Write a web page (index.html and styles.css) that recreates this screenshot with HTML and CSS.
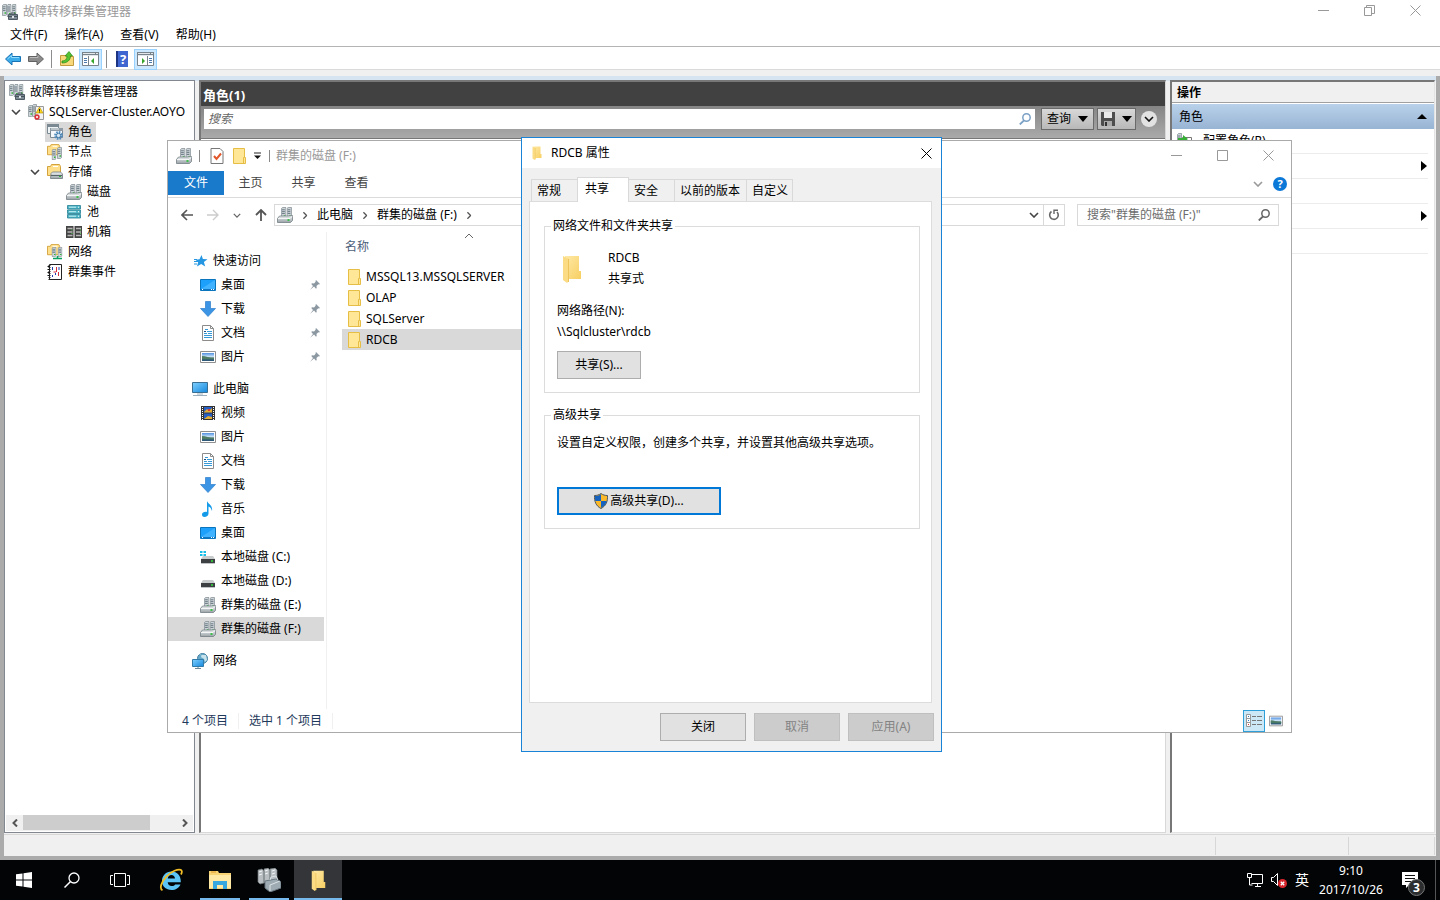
FILE: index.html
```html
<!DOCTYPE html>
<html lang="zh-CN">
<head>
<meta charset="utf-8">
<title>故障转移群集管理器</title>
<link rel="stylesheet" href="styles.css">
</head>
<body>
<svg class="sprite" aria-hidden="true">
  <defs>
    <linearGradient id="g-blue" x1="0" y1="0" x2="1" y2="1"><stop offset="0" stop-color="#7fd0ff"/><stop offset="1" stop-color="#1487dc"/></linearGradient>
    <linearGradient id="g-sky" x1="0" y1="0" x2="0" y2="1"><stop offset="0" stop-color="#4f8fe0"/><stop offset=".5" stop-color="#d7ecfa"/><stop offset=".6" stop-color="#4c7468"/><stop offset="1" stop-color="#26547c"/></linearGradient>
    <linearGradient id="g-folder" x1="0" y1="0" x2="1" y2="1"><stop offset="0" stop-color="#ffe9a6"/><stop offset="1" stop-color="#f7cf62"/></linearGradient>
    <linearGradient id="g-metal" x1="0" y1="0" x2="0" y2="1"><stop offset="0" stop-color="#eef1f2"/><stop offset="1" stop-color="#9aa3a8"/></linearGradient>
  </defs>
  <symbol id="server" viewBox="0 0 5 13" preserveAspectRatio="none"><path d="M.5 1.500 1.500.5h3v11l-1 1h-3z" fill="#cdd5d9" stroke="#7b878e" stroke-width=".7"/><path d="M1 3h2.500M1 5h2.500M1 7h2.500" stroke="#56666f" stroke-width=".8"/><path d="M2.500 9h1.500v1.500H2.500z" fill="#35b53a"/></symbol>
  <symbol id="cluster" viewBox="0 0 16 16"><use href="#server" x="0" y="0" width="5" height="12"/><use href="#server" x="4.500" y="0" width="5" height="13"/><use href="#server" x="9.500" y="0" width="5" height="12"/><path d="M6.500 10.500h9v5h-9z" fill="#7d8a94" stroke="#4f5b64"/><path d="M9 10.500V9h4v1.500M6.500 12.500h9" fill="none" stroke="#46525b"/><path d="M10 12h2v2h-2z" fill="#dfe6ea"/></symbol>
  <symbol id="clusterwarn" viewBox="0 0 16 16"><use href="#server" x="0" y="1" width="5" height="12"/><use href="#server" x="4" y="0" width="5" height="13"/><path d="M7.500 2.500h8v13h-8z" fill="#f3f3f3" stroke="#999"/><path d="m11.500 3 3.500 6H8z" fill="#ffd91c" stroke="#b58b00" stroke-width=".6"/><path d="M11.500 5v2m0 .5v1" stroke="#222"/><circle cx="9" cy="13" r="2.700" fill="#d9353b"/><path d="m8 12 2 2m0-2-2 2" stroke="#fff" stroke-width=".8"/></symbol>
  <symbol id="roles" viewBox="0 0 16 16"><path d="M.5.5h11v9H.5z" fill="#eef3f6" stroke="#7b8992"/><path d="M0 0h12v3H0z" fill="#7b8992"/><path d="M3.500 4.500h12v9h-12z" fill="#f4f8fb" stroke="#7b8992"/><path d="M3 4h13v3H3z" fill="#8e9ba4"/><path d="M4 5h8" stroke="#e9eef1"/><circle cx="11.500" cy="11.500" r="3.200" fill="none" stroke="#4f8cc0" stroke-width="2.400" stroke-dasharray="1.500 1"/><circle cx="11.500" cy="11.500" r="2.200" fill="#d6e7f3" stroke="#3e78a8"/></symbol>
  <symbol id="folderflat" viewBox="0 0 16 16"><path d="M.5 3.500h3l1-2h8l1 2v9H.5z" fill="#ffdf8a" stroke="#d3a23c"/><path d="M6 3.500h5" stroke="#fff"/></symbol>
  <symbol id="nodes" viewBox="0 0 16 16"><use href="#folderflat" width="15" height="15" y="-1"/><use href="#server" x="4.500" y="5" width="5" height="11"/><use href="#server" x="10" y="3" width="5" height="12"/></symbol>
  <symbol id="storage" viewBox="0 0 16 16"><use href="#folderflat" y="-1" width="16" height="16"/><path d="m4 9.500 1.500-1.500h8l2 2v4.500h-12z" fill="url(#g-metal)" stroke="#707a80" stroke-width=".8"/><path d="M4 11.500h11" stroke="#59636a"/><path d="M12 12.500h2" stroke="#29bd32"/></symbol>
  <symbol id="disk" viewBox="0 0 16 16"><use href="#server" x="4" y="0" width="5.500" height="12"/><use href="#server" x="9.500" y="0" width="5.500" height="12"/><path d="m.5 11.500 2-2.500h8.500l4.500-.5v5l-2 2H.5z" fill="url(#g-metal)" stroke="#737d83" stroke-width=".8"/><path d="M1 11.500h12l2-2" fill="none" stroke="#fff" stroke-width=".8"/><path d="M10.500 13h2" stroke="#16c326" stroke-width="1.500"/></symbol>
  <symbol id="pool" viewBox="0 0 16 16"><path d="M1.500 1.500h13v3.500h-13zm0 4.500h13v3.500h-13zm0 4.500h13V14h-13z" fill="#52b7c9" stroke="#237f92" stroke-width=".8"/><path d="M3 3.200h7M3 7.700h7M3 12.200h7" stroke="#c8f0f5"/><path d="M12 3.200h1m-1 4.500h1m-1 4.500h1" stroke="#fff"/></symbol>
  <symbol id="enclosure" viewBox="0 0 16 16"><path d="M0 2h7.500v12H0zm8.500 0H16v12H8.500z" fill="#444"/><path d="M1.500 4.500h5m-5 3.500h5m-5 3.500h5m3.500-7h5M10 8h5m-5 3.500h5" stroke="#b7b7b7" stroke-width="1.300"/><path d="M5.500 6h1m-1 3.500h1M14 6h1m-1 3.500h1" stroke="#61d35a"/></symbol>
  <symbol id="clusternet" viewBox="0 0 16 16"><use href="#folderflat" width="15" height="15" y="-1"/><use href="#server" x="4.500" y="3" width="5" height="10"/><use href="#server" x="10.500" y="3" width="5" height="10"/><path d="M6 14.500h9M10.500 12v3" stroke="#0c9f62" stroke-width="1.600"/></symbol>
  <symbol id="events" viewBox="0 0 16 16"><path d="M2.500.5h12v15h-12z" fill="#fff" stroke="#222"/><path d="M2.500 1v15" stroke="#222" stroke-width="2" stroke-dasharray="1 1"/><path d="M.5 2.500h2m-2 3h2m-2 3h2m-2 3h2" stroke="#111"/><path d="M5.500 3v3m0 5v2M8.500 9v2M12 3v3" stroke="#203fae"/><path d="M9.500 3v5m-3 0h2.500m2.500 0v4" stroke="#d42f3b"/></symbol>
  <symbol id="star" viewBox="0 0 16 16"><path d="m9.500 2 1.400 4 4.600.2-3.600 2.700 1.300 4.600-4-2.500L5 13.500l1.200-4.400-2.900-2.400 4.200-.5z" fill="#2596e1"/><path d="M2 6.500h3m-3 2h4m-4 2.500h3" stroke="#2596e1"/></symbol>
  <symbol id="desktop" viewBox="0 0 16 16"><path d="M.5 2.500h15v11H.5z" fill="#1da0fb" stroke="#0a75bc"/><path d="m1 12 14-9v9z" fill="#40b2ff"/><path d="M1 12.500h14" stroke="#0e76c4"/><path d="M2 12.500h1m8 0h1m1 0h1" stroke="#fff"/></symbol>
  <symbol id="down" viewBox="0 0 16 16"><path d="M5.500.5h5v7h5L8 15.500.5 7.500h5z" fill="#3b94e4" stroke="#2b7ecb" stroke-width=".7"/></symbol>
  <symbol id="doc" viewBox="0 0 16 16"><path d="M2.500.5h8l3 3v12h-11z" fill="#fff" stroke="#8b8b8b"/><path d="M10.500.5v3h3" fill="none" stroke="#8b8b8b"/><path d="M5 4.500h3m-1 2h5M4 8.500h3m1 0h4m-8 2h8m-8 2h8" stroke="#3799d6"/><path d="M4 6.500h2" stroke="#174f82"/></symbol>
  <symbol id="pic" viewBox="0 0 16 16"><path d="M.5 2.500h15v11H.5z" fill="#fff" stroke="#8f8f8f"/><path d="M2 4h12v8H2z" fill="url(#g-sky)"/><path d="M2 7c4 0 7 2 12 2v1H2z" fill="#4e7d66"/></symbol>
  <symbol id="pc" viewBox="0 0 16 16"><path d="M.5 1.500h15v10H.5z" fill="url(#g-blue)" stroke="#3b6f91"/><path d="M5 13h6M1 14.500h14" stroke="#9bb0bc"/></symbol>
  <symbol id="video" viewBox="0 0 16 16"><path d="M1 1h14v14H1z" fill="#333"/><path d="M2.500 2v13m11-13v13" stroke="#fff" stroke-dasharray="1 1"/><path d="M4 2h8v5.500H4zm0 6.500h8V14H4z" fill="#285fc5"/><path d="m4 7 3-3 2 2 3-3v4.500H4zm0 7 4-3 4 1v2z" fill="#e6ae33"/><path d="M8 4h2v2H8z" fill="#d53a39"/></symbol>
  <symbol id="music" viewBox="0 0 16 16"><path d="M7 0c1 3 6 4 5 10-1-3-2-4-3.500-4.500v7c0 2-2 3.500-4 3.500S2 15 2 13.500c0-2 2.500-3 5-2.500z" fill="#139be9"/></symbol>
  <symbol id="ddrive" viewBox="0 0 16 16"><path d="m1 10 2-3h10l2 3z" fill="#c9cccd"/><path d="M1 10h14v4H1z" fill="#3c4043"/><path d="M11 12h2" stroke="#31e13a" stroke-width="1.500"/><path d="M1 14.500h14" stroke="#bfc3c5"/></symbol>
  <symbol id="cdrive" viewBox="0 0 16 16"><use href="#ddrive" width="16" height="16"/><path d="M0 2h2.500v2H0zm3.500 0H6v2H3.500zM0 5h2.500v2H0zm3.500 0H6v2H3.500z" fill="#15bde9"/></symbol>
  <symbol id="globe" viewBox="0 0 16 16"><circle cx="10.500" cy="5.500" r="5" fill="#66aacb" stroke="#427d9f"/><path d="M7 2c2-1 3 0 2 2l3 2 1 3 2-2-1-5" fill="#c7e2ea"/><path d="M.5 6.500h11v7H.5z" fill="url(#g-blue)" stroke="#317ba8"/><path d="M3 15.500h6M6 14v1" stroke="#6c8998"/></symbol>
  <symbol id="folder" viewBox="0 0 14 16"><path d="M1.500.5h11v9h1v6h-12z" fill="#ffe797" stroke="#e6bd45"/><path d="M11.500 15.500v-6h1" fill="none" stroke="#e6bd45"/></symbol>
  <symbol id="folder3d" viewBox="0 0 20 28"><path d="M3 1h14v15h2v8H3z" fill="url(#g-folder)"/><path d="m1 1 6 3v22l-2 2-4-3z" fill="#fbdc85"/><path d="M6.500 4v23" stroke="#edc35b"/></symbol>
  <symbol id="pin" viewBox="0 0 10 10"><path d="m6 0 4 4-1 .5-.7-.2L6.500 6l.2 2-.7.700L4 6.500.5 9.500 0 10l3-4L1.300 4l.7-.7 2 .2 1.700-1.800L5.500 1z" fill="#8c98a1"/></symbol>
  <symbol id="chev" viewBox="0 0 10 6"><path d="m1 1 4 4 4-4" fill="none" stroke="currentColor" stroke-width="1.600"/></symbol>
  <symbol id="close" viewBox="0 0 11 11"><path d="m.5.5 10 10m0-10-10 10" stroke="currentColor"/></symbol>
  <symbol id="min" viewBox="0 0 11 11"><path d="M0 5.500h11" stroke="currentColor"/></symbol>
  <symbol id="mag" viewBox="0 0 12 12"><circle cx="7.500" cy="4.500" r="3.700" fill="none" stroke="currentColor" stroke-width="1.500"/><path d="M5 7.300.8 11.500" stroke="currentColor" stroke-width="1.800"/></symbol>
  <symbol id="paneicon" viewBox="0 0 17 14"><path d="M.5.5h16v13H.5z" fill="#fff" stroke="#78838c"/><path d="M0 0h17v4H0z" fill="#78838c"/><path d="M1 1.500h12m1 0h2M1 3.500h15" stroke="#e2e8ec"/></symbol>
</svg>

<main class="app">
  <header class="app-title">
    <svg class="i16"><use href="#cluster"/></svg>
    <h1>故障转移群集管理器</h1>
    <div class="win-buttons">
      <button aria-label="最小化"><svg class="i11"><use href="#min"/></svg></button>
      <button aria-label="还原"><svg class="i11" viewBox="0 0 11 11"><path d="M.5 2.500h7v8h-7zM2.500 2.500v-2h8v8h-2.500" fill="none" stroke="currentColor"/></svg></button>
      <button aria-label="关闭窗口"><svg class="i11"><use href="#close"/></svg></button>
    </div>
  </header>
  <nav class="menu"><button>文件(F)</button><button>操作(A)</button><button>查看(V)</button><button>帮助(H)</button></nav>
  <div class="toolbar">
    <button aria-label="后退"><svg class="i16" viewBox="0 0 16 16"><path d="m.5 8 6.500-6v3.500h8.500v5H7V14z" fill="#3cabe9" stroke="#1873b4"/><path d="m2.500 8 4-3.500v2H14" fill="none" stroke="#90dcff"/></svg></button>
    <button aria-label="前进"><svg class="i16" viewBox="0 0 16 16"><path d="M15.500 8 9 2v3.500H.5v5H9V14z" fill="#8b8b8b" stroke="#626262"/><path d="M2 6.500h8v-2" fill="none" stroke="#b9b9b9"/></svg></button>
    <span class="tool-sep"></span>
    <button aria-label="上一级"><svg class="i16" viewBox="0 0 16 16"><path d="M1.500 4.500h5l1 1h7v9h-13z" fill="#f8d878" stroke="#c39b3f"/><path d="M3 10c4 0 5-3 5-5H6l4-4.500L13.500 5h-2c0 4-3 7-8.500 7z" fill="#55c432" stroke="#28881b" stroke-width=".7"/></svg></button>
    <button class="pressed" aria-label="显示控制台树"><svg class="pane-svg" viewBox="0 0 17 14"><use href="#paneicon"/><path d="M6.500 4v10" stroke="#78838c"/><path d="M2 6.500h3m-3 2h3m-3 2h3" stroke="#4e79ad"/><path d="m12 6-3 3 3 3z" fill="#35a52b"/></svg></button>
    <span class="tool-sep"></span>
    <button aria-label="帮助"><svg class="i16" viewBox="0 0 16 16"><path d="M2 0h12v16H2z" fill="#3f66d0"/><path d="M2 0h2v16H2z" fill="#1c3482"/><text x="9" y="13" class="help-q">?</text></svg></button>
    <button class="pressed" aria-label="显示操作窗格"><svg class="pane-svg" viewBox="0 0 17 14"><use href="#paneicon"/><path d="M10.500 4v10" stroke="#78838c"/><path d="M12 6.500h3m-3 2h3m-3 2h3" stroke="#4e79ad"/><path d="m5 6 3 3-3 3z" fill="#35a52b"/></svg></button>
  </div>
  <div class="tool-gap"></div>
  <div class="frame">
    <div class="panes">
      <section class="tree-pane">
        <ul class="tree">
          <li class="l0"><svg class="i16"><use href="#cluster"/></svg>故障转移群集管理器</li>
          <li class="l1"><svg class="twist"><use href="#chev"/></svg><svg class="i16"><use href="#clusterwarn"/></svg>SQLServer-Cluster.AOYO</li>
          <li class="l2"><span class="picked"><svg class="i16"><use href="#roles"/></svg>角色</span></li>
          <li class="l2"><svg class="i16"><use href="#nodes"/></svg>节点</li>
          <li class="l2"><svg class="twist"><use href="#chev"/></svg><svg class="i16"><use href="#storage"/></svg>存储</li>
          <li class="l3"><svg class="i16"><use href="#disk"/></svg>磁盘</li>
          <li class="l3"><svg class="i16"><use href="#pool"/></svg>池</li>
          <li class="l3"><svg class="i16"><use href="#enclosure"/></svg>机箱</li>
          <li class="l2"><svg class="i16"><use href="#clusternet"/></svg>网络</li>
          <li class="l2"><svg class="i16"><use href="#events"/></svg>群集事件</li>
        </ul>
        <div class="hscroll">
          <button aria-label="向左滚动"><svg class="sarrow" viewBox="0 0 6 8"><path d="M5 .5 1.500 4 5 7.500" fill="none" stroke="#555" stroke-width="2"/></svg></button>
          <div class="track"><div class="thumb"></div></div>
          <button aria-label="向右滚动"><svg class="sarrow" viewBox="0 0 6 8"><path d="M1 .5 4.500 4 1 7.500" fill="none" stroke="#555" stroke-width="2"/></svg></button>
        </div>
      </section>
      <section class="roles-pane">
        <h2>角色(1)</h2>
        <div class="role-search">
          <label class="role-field"><input type="text" placeholder="搜索" aria-label="搜索角色"><svg class="i12"><use href="#mag"/></svg></label>
          <button class="grey-btn">查询<i class="tri"></i></button>
          <button class="grey-btn save" aria-label="保存"><svg class="i14" viewBox="0 0 14 14"><path d="M0 0h14v14H1l-1-1z" fill="#4d4d4d"/><path d="M3 0h8v6H3z" fill="#e9e9e9"/><path d="M3 9h8v5H3z" fill="#a9a9a9"/><path d="M4 10h2v4H4z" fill="#333"/></svg><i class="tri"></i></button>
          <button class="round" aria-label="展开"><svg class="twist"><use href="#chev"/></svg></button>
        </div>
        <div class="role-list"></div>
      </section>
      <aside class="actions-pane">
        <h2>操作</h2>
        <button class="action-head">角色<i class="tri up"></i></button>
        <button class="action"><svg class="i16" viewBox="0 0 16 16"><use href="#server" width="5" height="13"/><path d="M5.500 4.500h9v8h-9z" fill="#fff" stroke="#777"/><path d="M1 5h5V2l5 4-5 4V7H1z" fill="#36ae36"/></svg>配置角色(R)</button>
        <button class="action" aria-label="子菜单"><i class="tri right"></i></button>
        <div class="action"></div>
        <button class="action" aria-label="子菜单"><i class="tri right"></i></button>
        <div class="action"></div>
      </aside>
    </div>
    <footer class="app-status"><span></span><span></span><span></span></footer>
  </div>
</main>

<section class="explorer" aria-label="群集的磁盘 (F:)">
  <header class="ex-title">
    <svg class="i16"><use href="#disk"/></svg><span class="bar"></span>
    <button aria-label="属性"><svg class="i14" viewBox="0 0 14 16"><path d="M1 .5h9l3 3v12H1z" fill="#fff" stroke="#777"/><path d="m4 8 2.500 3L11 5.500" fill="none" stroke="#e2572b" stroke-width="2"/></svg></button>
    <button aria-label="新建文件夹"><svg class="i14"><use href="#folder"/></svg></button>
    <button aria-label="自定义快速访问工具栏"><svg class="qat" viewBox="0 0 8 8"><path d="M0 1h7" stroke="#222"/><path d="M0 3.500h7L3.500 7z" fill="#111"/></svg></button>
    <span class="bar"></span><span class="ex-name">群集的磁盘 (F:)</span>
    <div class="win-buttons ex-buttons">
      <button aria-label="最小化"><svg class="i11"><use href="#min"/></svg></button>
      <button aria-label="最大化"><svg class="i11" viewBox="0 0 11 11"><path d="M.5.5h10v10H.5z" fill="none" stroke="currentColor"/></svg></button>
      <button aria-label="关闭窗口"><svg class="i11"><use href="#close"/></svg></button>
    </div>
  </header>
  <nav class="ribbon">
    <button class="file-tab">文件</button><button>主页</button><button>共享</button><button>查看</button>
    <span class="ribbon-end"><button aria-label="展开功能区"><svg class="twist light"><use href="#chev"/></svg></button><button class="help" aria-label="帮助">?</button></span>
  </nav>
  <div class="address-row">
    <div class="travel">
      <button aria-label="后退"><svg class="i12" viewBox="0 0 12 12"><path d="M12 6H1m5-5L1 6l5 5" fill="none" stroke="#555" stroke-width="1.600"/></svg></button>
      <button aria-label="前进"><svg class="i12" viewBox="0 0 12 12"><path d="M0 6h11M6 1l5 5-5 5" fill="none" stroke="#ccc" stroke-width="1.400"/></svg></button>
      <button aria-label="最近位置"><svg class="mini"><use href="#chev"/></svg></button>
      <button aria-label="向上"><svg class="i12" viewBox="0 0 12 12"><path d="M6 12V1M1 6l5-5 5 5" fill="none" stroke="#555" stroke-width="1.800"/></svg></button>
    </div>
    <div class="address">
      <svg class="i16"><use href="#disk"/></svg><svg class="sep-chev"><use href="#chev"/></svg>
      <a href="#pc">此电脑</a><svg class="sep-chev"><use href="#chev"/></svg>
      <a href="#f">群集的磁盘 (F:)</a><svg class="sep-chev"><use href="#chev"/></svg>
      <button class="addr-drop" aria-label="历史记录"><svg class="twist"><use href="#chev"/></svg></button>
      <button class="refresh" aria-label="刷新"><svg class="i12" viewBox="0 0 12 12"><path d="M3.500 2.500A4.300 4.300 0 1 0 9 3" fill="none" stroke="#666" stroke-width="1.600"/><path d="M6 5V1.200h4" fill="none" stroke="#666" stroke-width="1.400"/></svg></button>
    </div>
    <label class="ex-search"><input type="text" placeholder='搜索"群集的磁盘 (F:)"' aria-label="搜索"><svg class="i12"><use href="#mag"/></svg></label>
  </div>
  <div class="ex-body">
    <nav class="places">
      <ul>
        <li class="top"><svg class="i16"><use href="#star"/></svg>快速访问</li>
        <li><svg class="i16"><use href="#desktop"/></svg>桌面<svg class="pin"><use href="#pin"/></svg></li>
        <li><svg class="i16"><use href="#down"/></svg>下载<svg class="pin"><use href="#pin"/></svg></li>
        <li><svg class="i16"><use href="#doc"/></svg>文档<svg class="pin"><use href="#pin"/></svg></li>
        <li><svg class="i16"><use href="#pic"/></svg>图片<svg class="pin"><use href="#pin"/></svg></li>
      </ul>
      <ul>
        <li class="top"><svg class="i16"><use href="#pc"/></svg>此电脑</li>
        <li><svg class="i16"><use href="#video"/></svg>视频</li>
        <li><svg class="i16"><use href="#pic"/></svg>图片</li>
        <li><svg class="i16"><use href="#doc"/></svg>文档</li>
        <li><svg class="i16"><use href="#down"/></svg>下载</li>
        <li><svg class="i16"><use href="#music"/></svg>音乐</li>
        <li><svg class="i16"><use href="#desktop"/></svg>桌面</li>
        <li><svg class="i16"><use href="#cdrive"/></svg>本地磁盘 (C:)</li>
        <li><svg class="i16"><use href="#ddrive"/></svg>本地磁盘 (D:)</li>
        <li><svg class="i16"><use href="#disk"/></svg>群集的磁盘 (E:)</li>
        <li class="current"><svg class="i16"><use href="#disk"/></svg>群集的磁盘 (F:)</li>
      </ul>
      <ul><li class="top"><svg class="i16"><use href="#globe"/></svg>网络</li></ul>
    </nav>
    <div class="files">
      <svg class="sort" viewBox="0 0 10 6"><path d="m1 5 4-4 4 4" fill="none" stroke="#666"/></svg>
      <div class="col-head">名称</div>
      <ul>
        <li><svg class="i14"><use href="#folder"/></svg>MSSQL13.MSSQLSERVER</li>
        <li><svg class="i14"><use href="#folder"/></svg>OLAP</li>
        <li><svg class="i14"><use href="#folder"/></svg>SQLServer</li>
        <li class="current"><svg class="i14"><use href="#folder"/></svg>RDCB</li>
      </ul>
    </div>
  </div>
  <footer class="ex-status">
    <span>4 个项目</span><span>选中 1 个项目</span>
    <div class="views">
      <button class="on" aria-label="详细信息"><svg class="view-svg" viewBox="0 0 16 14"><path d="M.5.500h4v12h-4zM.5 4.500h4m-4 4h4" fill="#fff" stroke="#999"/><path d="M2 2.500h1m-1 4h1" stroke="#2e7ac0"/><path d="M2 10.500h1" stroke="#d33"/><path d="M6 2.500h4m1 0h5m-10 4h4m1 0h5m-10 4h4m1 0h5" stroke="#777"/></svg></button>
      <button aria-label="大图标"><svg class="i14"><use href="#pic"/></svg></button>
    </div>
  </footer>
</section>

<section class="dialog" role="dialog" aria-label="RDCB 属性">
  <header class="dlg-title"><svg class="dlg-icon"><use href="#folder3d"/></svg><span>RDCB 属性</span><button aria-label="关闭对话框"><svg class="i11"><use href="#close"/></svg></button></header>
  <div class="tabs" role="tablist">
    <button role="tab">常规</button><button role="tab" class="on" aria-selected="true">共享</button><button role="tab">安全</button><button role="tab" class="wide">以前的版本</button><button role="tab">自定义</button>
  </div>
  <div class="panel" role="tabpanel">
    <fieldset class="group">
      <legend>网络文件和文件夹共享</legend>
      <div class="share"><svg class="share-icon"><use href="#folder3d"/></svg><div><p>RDCB</p><p>共享式</p></div></div>
      <div class="path"><p>网络路径(N):</p><p>\\Sqlcluster\rdcb</p></div>
      <button class="btn">共享(S)...</button>
    </fieldset>
    <fieldset class="group adv">
      <legend>高级共享</legend>
      <p>设置自定义权限，创建多个共享，并设置其他高级共享选项。</p>
      <button class="btn focus"><svg class="shield" viewBox="0 0 14 16"><path d="M7 .5c2 1.500 4 2 6.500 2 .3 6-1.500 10.500-6.500 13C2 13 .2 8.500.5 2.500 3 2.500 5 2 7 .5z" fill="#fbb829" stroke="#4b5660"/><path d="M7 1.200v6.800H1.200C1 6 1 5 1 3c2.500 0 4-.5 6-1.800zM7 8h5.800c-.8 3-2.500 5.300-5.800 7z" fill="#1563be"/></svg>高级共享(D)...</button>
    </fieldset>
  </div>
  <footer class="dlg-foot"><button class="btn">关闭</button><button class="btn" disabled>取消</button><button class="btn" disabled>应用(A)</button></footer>
</section>

<footer class="taskbar">
  <button aria-label="开始"><svg class="i16" viewBox="0 0 16 16"><path d="m0 2.300 6.500-.9v6.100H0zm7.500-1L16 0v7.500H7.500zM0 8.500h6.500v6.100L0 13.700zm7.500 0H16V16l-8.500-1.300z" fill="#fff"/></svg></button>
  <button aria-label="搜索任务栏"><svg class="i16" viewBox="0 0 16 16"><circle cx="10" cy="6" r="5" fill="none" stroke="#fff" stroke-width="1.300"/><path d="M6.500 9.500.5 15.500" stroke="#fff" stroke-width="1.500"/></svg></button>
  <button aria-label="任务视图"><svg class="taskview" viewBox="0 0 20 14"><path d="M4.500.5h11v13h-11zM3 2.500H.5v9H3m14-9h2.500v9H17" fill="none" stroke="#fff"/></svg></button>
  <div class="apps">
    <button aria-label="Internet Explorer"><svg class="i24" viewBox="0 0 24 24"><path fill-rule="evenodd" d="M21.500 16.500c-1.500 3.500-4.800 5.500-9 5.500C7 22 3 18.300 3 13s4-9.500 9.500-9.500c6 0 9.500 4.200 9.300 10.700H8.700c.2 2.300 1.600 3.800 4 3.800 1.700 0 2.800-.5 3.400-1.500zM8.800 10.500h7.200c-.2-2.200-1.600-3.500-3.600-3.500s-3.300 1.300-3.600 3.500z" fill="#5cc5f5"/><path d="M3.500 22.300C0 20.500 2.500 13.500 7.500 8.300S19 .8 21.700 1.800c1.500.6 1.500 2.500.3 4.700" fill="none" stroke="#f2bd25" stroke-width="1.800"/></svg></button>
    <button class="running" aria-label="文件资源管理器"><svg class="i24" viewBox="0 0 24 24"><path d="M1 3h9l1 2h12v16H1z" fill="#f8d374"/><path d="M1 7h22v13H1z" fill="#ffe9a5"/><path d="M5 13h14v8h-4v-4H9v4H5z" fill="#37a7df"/><path d="M3 4h5" stroke="#e09a29"/></svg></button>
    <button class="running" aria-label="群集管理器"><svg class="i24" viewBox="0 0 24 24"><g fill="#b8bec1" stroke="#70787c" stroke-width=".7"><path d="m1 2 4-1 2 2v12l-4 1-2-2zM7 1l4-1 2 2v12l-4 2-2-2zM13 1l5-1 2 2v12l-5 1-2-2z"/></g><path d="m2 4 3-1M2 7l3-1m3-3 3-1M8 6l3-1m4-2 3-1m-3 4 3-1" stroke="#f1f4f4"/><path d="m8 13 11-2 5 3v6l-11 4-5-4z" fill="#9eabb2" stroke="#697780"/><path d="m13 12 1-3 5-1 2 4M13 17l10-4M13 17v6" fill="none" stroke="#dce3e6"/></svg></button>
    <button class="running active" aria-label="RDCB 属性"><svg class="task-folder"><use href="#folder3d"/></svg></button>
  </div>
  <div class="tray">
    <svg class="i16" viewBox="0 0 16 16"><path d="M4.500 2.500h11v9h-11M8 14.500h6M10.500 12v2.500M.5 1.500h4v4h-4zM2.500 6v7h3" fill="none" stroke="#fff"/></svg>
    <svg class="i16" viewBox="0 0 16 16"><path d="M.5 5.500h2l4-4v12l-4-4h-2z" fill="none" stroke="#fff"/><circle cx="11.500" cy="11.500" r="4.500" fill="#d9272e"/><path d="m9.800 9.800 3.400 3.400m0-3.400-3.400 3.400" stroke="#fff" stroke-width="1.300"/></svg>
    <span class="ime">英</span>
    <time datetime="2017-10-26T09:10"><span>9:10</span><span>2017/10/26</span></time>
    <button class="notify" aria-label="通知"><svg class="i16" viewBox="0 0 16 16"><path d="M0 0h16v13H7l-3 3v-3H0z" fill="#fff"/><path d="M3 3.500h10M3 6.500h10M3 9.500h6" stroke="#111"/></svg><b>3</b></button>
    <button class="peek" aria-label="显示桌面"></button>
  </div>
</footer>
</body>
</html>
```
FILE: styles.css
```css
* { box-sizing: border-box; }
html { height: 100%; }
body {
  margin: 0; height: 100%; overflow: hidden; position: relative;
  display: flex; flex-direction: column;
  background: #fff; color: #000;
  font: 12px/16px "Noto Sans", "Noto Sans CJK SC", sans-serif;
}
h1, h2, p, ul { margin: 0; padding: 0; font-size: 12px; font-weight: 400; }
ul { list-style: none; }
button, input { font: inherit; color: inherit; }
button { border: 0; padding: 0; margin: 0; background: none; display: flex; align-items: center; justify-content: center; white-space: nowrap; }
a { color: inherit; text-decoration: none; }
svg { display: block; flex: none; }
.sprite { position: absolute; width: 0; height: 0; }
.i11 { width: 11px; height: 11px; }
.i12 { width: 12px; height: 12px; }
.i14 { width: 14px; height: 16px; }
.i16 { width: 16px; height: 16px; }
.i24 { width: 24px; height: 24px; }
.twist { width: 10px; height: 6px; color: #444; }
.twist.light { color: #999; }
.mini { width: 8px; height: 5px; color: #666; }
.tri { width: 0; height: 0; border: 5px solid transparent; border-bottom-width: 0; border-top: 6px solid #000; }
.tri.up { border-top: 0; border-bottom: 5px solid #000; }
.tri.right { border: 5px solid transparent; border-right-width: 0; border-left: 6px solid #000; }

/* cluster manager */
.app { flex: 1; min-height: 0; display: flex; flex-direction: column; }
.app-title { height: 24px; display: flex; align-items: center; padding-left: 2px; gap: 5px; color: #999; }
.win-buttons { margin-left: auto; display: flex; color: #999; }
.win-buttons button { width: 46px; height: 20px; }
.app-title .win-buttons { align-self: flex-start; padding-right: 2px; }
.menu { height: 23px; display: flex; align-items: center; gap: 17px; padding: 0 10px; border-bottom: 1px solid #b4b4b4; }
.toolbar { height: 23px; display: flex; align-items: center; gap: 7px; padding: 2px 0 0 5px; border-bottom: 1px solid #dadada; }
.toolbar button.pressed { width: 23px; height: 21px; background: #cce8ff; border: 1px solid #99d1ff; margin: 0 -3px; }
.tool-sep { width: 1px; height: 18px; background: #8d8d8d; }
.pane-svg { width: 17px; height: 14px; }
.help-q { font: bold 13px "Noto Sans", sans-serif; fill: #fff; text-anchor: middle; }
.tool-gap { height: 6px; background: #f0f0f0; }
.frame { flex: 1; min-height: 0; display: flex; flex-direction: column; border: solid #ababab; border-width: 0 4px 4px; background: #f0f0f0; }
.panes { flex: 1; min-height: 0; display: flex; gap: 4px; padding: 4px 1px 1px 0; background: linear-gradient(#d6e3f1 5px, #f0f0f0 5px); }
.tree-pane { width: 191px; flex: none; display: flex; flex-direction: column; justify-content: space-between; padding-top: 1px; border: 1px solid #828790; background: #fff; overflow: hidden; }
.tree li { height: 20px; display: flex; align-items: center; gap: 5px; white-space: nowrap; }
.tree .l0 { padding-left: 4px; }
.tree .l1 { padding-left: 23px; }
.tree .l2 { padding-left: 42px; }
.tree .l3 { padding-left: 61px; }
.tree .twist { margin: 0 2px 0 -17px; }
.picked { display: flex; align-items: center; gap: 5px; height: 20px; padding: 0 4px 0 2px; margin-left: -2px; background: #d9d9d9; }
.hscroll { display: flex; height: 16px; margin: 1px; background: #f0f0f0; }
.hscroll button { width: 17px; }
.sarrow { width: 6px; height: 8px; }
.track { flex: 1; }
.thumb { width: 83%; height: 15px; background: #cdcdcd; }
.roles-pane { flex: 1; display: flex; flex-direction: column; border: 1px solid #d8d8d8; border-top: 2px solid #777; border-left: 2px solid #777; background: #fff; }
.roles-pane h2 { height: 24px; padding: 3px 2px; background: #414141; color: #fff; font-size: 13px; line-height: 20px; font-weight: 700; }
.role-search { height: 32px; display: flex; align-items: center; gap: 3px; padding: 0 8px 6px 3px; background: linear-gradient(#858585, #aaa); }
.role-field { flex: 1; display: flex; align-items: center; height: 20px; padding: 0 4px; margin-right: 3px; background: #fff; color: #7aa0c4; }
.role-field input { flex: 1; min-width: 0; border: 0; padding: 0; outline: 0; font-style: italic; }
.role-field input::placeholder { color: #666; opacity: 1; }
.grey-btn { width: 53px; height: 22px; gap: 7px; border: 1px solid #6a6a6a; background: linear-gradient(#d8d8d8, #b8b8b8); }
.grey-btn.save { width: 39px; }
.save .i14 { height: 14px; }
.round { width: 16px; height: 16px; border-radius: 50%; background: #e2e2e2; margin-left: 2px; }
.round .twist { color: #111; }
.role-list { flex: 1; border-top: 1px solid #777; }
.actions-pane { width: 265px; flex: none; display: flex; flex-direction: column; border: 1px solid #e3e3e3; border-top: 2px solid #777; border-left: 2px solid #777; background: #fff; }
.actions-pane h2 { height: 21px; padding: 3px 5px 1px; background: #f0f0f0; border-bottom: 1px solid #a0a0a0; font-weight: 700; }
.action-head { height: 26px; padding: 0 7px; justify-content: space-between; border-top: 1px solid #fff; background: linear-gradient(#b9d1ea, #98b4d4); }
.action { height: 25px; margin: 0 6px 0 5px; justify-content: flex-start; gap: 10px; border-bottom: 1px solid #ececec; }
.action .right { margin: 0 1px 0 auto; }
.app-status { height: 22px; display: flex; justify-content: flex-end; padding: 2px 1px 1px; border-top: 1px solid #d7d7d7; }
.app-status span { width: 133px; border-right: 1px solid #d7d7d7; }
.app-status span:last-child { width: 86px; }

/* explorer window */
.explorer { position: absolute; left: 167px; right: 148px; top: 140px; bottom: 167px; display: flex; flex-direction: column; border: 1px solid #aaa; background: #fff; }
.ex-title { height: 30px; display: flex; align-items: center; padding-left: 8px; gap: 8px; }
.ex-title .bar { width: 1px; height: 12px; background: #888; margin: 0 2px 0 -1px; }
.ex-title .bar + .ex-name { margin-left: -4px; }
.qat { width: 8px; height: 8px; }
.ex-name { color: #999; }
.ex-buttons { align-self: flex-start; padding-top: 4px; }
.ribbon { height: 27px; display: flex; align-items: flex-start; border-bottom: 1px solid #dadbdc; color: #444; }
.ribbon > button { width: 53px; height: 24px; }
.ribbon .file-tab { width: 56px; background: #1979ca; color: #fff; }
.ribbon-end { margin-left: auto; display: flex; align-items: center; gap: 10px; height: 26px; padding-right: 4px; }
.help { width: 14px; height: 14px; border-radius: 50%; background: #0c78d7; color: #fff; font-size: 11px; font-weight: 700; }
.address-row { display: flex; align-items: center; height: 34px; padding: 0 12px 0 13px; }
.travel { display: flex; justify-content: space-between; width: 86px; margin-right: 7px; }
.address { flex: 1; height: 22px; display: flex; align-items: center; border: 1px solid #d9d9d9; padding-left: 2px; gap: 8px; white-space: nowrap; }
.sep-chev { width: 8px; height: 5px; transform: rotate(-90deg); color: #555; }
.addr-drop { width: 18px; height: 20px; margin-left: auto; margin-right: -8px; }
.refresh { width: 21px; height: 20px; border-left: 1px solid #d9d9d9; }
.ex-search { width: 202px; height: 22px; display: flex; align-items: center; border: 1px solid #d9d9d9; padding: 0 8px 0 9px; margin-left: 12px; color: #666; }
.ex-search input { flex: 1; min-width: 0; border: 0; padding: 0; outline: 0; }
.ex-search input::placeholder { color: #6d6d6d; opacity: 1; }
.ex-body { flex: 1; min-height: 0; display: flex; }
.places { width: 159px; flex: none; padding-top: 17px; border-right: 1px solid #f0f0f0; }
.places ul { margin-bottom: 8px; }
.places li { height: 24px; display: flex; align-items: center; gap: 5px; padding: 0 6px 0 32px; margin-right: 2px; white-space: nowrap; }
.places li.top { padding-left: 24px; }
.places li.current, .files li.current { background: #d9d9d9; }
.pin { width: 10px; height: 10px; margin-left: auto; margin-right: -2px; }
.files { flex: 1; padding-left: 15px; }
.files ul { max-width: 560px; }
.sort { width: 10px; height: 6px; margin: 1px 0 0 122px; }
.col-head { height: 27px; padding-left: 3px; color: #4c607a; }
.files li { height: 21px; display: flex; align-items: center; gap: 5px; padding-left: 5px; }
.ex-status { height: 23px; display: flex; align-items: center; gap: 10px; padding-left: 14px; color: #1e395b; }
.ex-status span { padding-right: 10px; border-right: 1px solid #f0f0f0; }
.views { margin-left: auto; padding-right: 4px; display: flex; }
.views button { width: 22px; height: 22px; }
.views .on { background: #cce8f6; border: 1px solid #2e9fd8; }
.view-svg { width: 16px; height: 14px; }

/* properties dialog */
.dialog { position: absolute; left: 521px; top: 137px; width: 421px; display: flex; flex-direction: column; border: 1px solid #1883d7; background: #f0f0f0; }
.dlg-title { height: 30px; display: flex; align-items: center; gap: 9px; padding: 0 9px 0 10px; background: #fff; }
.dlg-icon { width: 10px; height: 14px; }
.dlg-title button { margin-left: auto; width: 12px; height: 12px; }
.tabs { display: flex; align-items: flex-end; height: 33px; padding-left: 9px; }
.tabs button { width: 46px; height: 22px; justify-content: flex-start; padding-left: 5px; border: 1px solid #d9d9d9; border-right: 0; border-bottom: 0; }
.tabs .on { width: 52px; height: 25px; padding: 0 0 2px 7px; margin-bottom: -1px; background: #fff; border-right: 1px solid #d9d9d9; z-index: 1; }
.tabs .on + button { border-left: 0; width: 45px; }
.tabs .wide { width: 72px; }
.tabs button:last-child { width: 47px; border-right: 1px solid #d9d9d9; }
.panel { height: 502px; margin: 0 9px 0 7px; padding: 16px 11px 0 14px; border: 1px solid #dcdcdc; background: #fff; }
.group { margin: 0 0 14px; padding: 13px 12px; border: 1px solid #dcdcdc; min-width: 0; }
.group legend { padding: 0 2px; margin-left: -6px; }
.share { display: flex; gap: 26px; padding: 0 0 0 5px; margin-bottom: 11px; line-height: 21px; }
.share-icon { width: 20px; height: 28px; margin-top: 8px; }
.path { line-height: 21px; margin-bottom: 9px; }
.btn { min-width: 84px; height: 28px; border: 1px solid #adadad; background: #e1e1e1; }
.btn:disabled { background: #ccc; border-color: #bfbfbf; color: #838383; }
.btn.focus { width: 164px; border: 2px solid #0078d7; gap: 2px; }
.shield { width: 14px; height: 16px; }
.adv { padding-top: 12px; }
.adv p { height: 52px; }
.dlg-foot { display: flex; justify-content: flex-end; gap: 8px; padding: 10px 7px; }
.dlg-foot .btn { width: 86px; }

/* taskbar */
.taskbar { height: 40px; display: flex; background: #020406; color: #fff; }
.taskbar > button, .apps button { width: 48px; height: 40px; }
.taskview { width: 20px; height: 14px; }
.apps { display: flex; gap: 1px; padding-left: 3px; }
.running { position: relative; }
.running::after { content: ""; position: absolute; left: 4px; right: 4px; bottom: 0; height: 2px; background: #76b9ed; }
.active { background: #333538; }
.active::after { left: 0; right: 0; }
.task-folder { width: 15px; height: 21px; }
.tray { margin-left: auto; display: flex; align-items: center; gap: 8px; }
.ime { font-size: 14px; }
.tray time { display: flex; flex-direction: column; width: 68px; line-height: 19px; align-items: center; }
.notify { position: relative; width: 34px; height: 40px; }
.notify b { position: absolute; left: 15px; top: 19px; width: 17px; height: 17px; border-radius: 50%; border: 1px solid #777; background: #2b2d2f; line-height: 15px; text-align: center; }
.peek { width: 5px; height: 40px; border-left: 1px solid #555; }
```
